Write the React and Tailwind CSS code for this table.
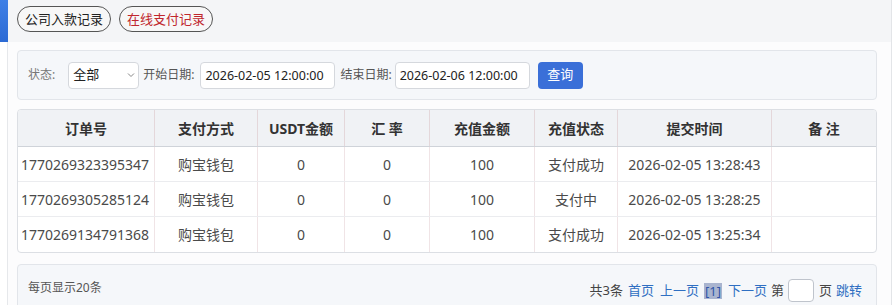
import { useState } from "react";

const rows = [
  { id: "1770269323395347", way: "购宝钱包", usdt: "0", rate: "0", amount: "100", status: "支付成功", time: "2026-02-05 13:28:43" },
  { id: "1770269305285124", way: "购宝钱包", usdt: "0", rate: "0", amount: "100", status: "支付中", time: "2026-02-05 13:28:25" },
  { id: "1770269134791368", way: "购宝钱包", usdt: "0", rate: "0", amount: "100", status: "支付成功", time: "2026-02-05 13:25:34" },
];

const cols = [
  { label: "订单号", w: "w-[137px]" },
  { label: "支付方式", w: "w-[103px]" },
  { label: "USDT金额", w: "w-[87px]" },
  { label: "汇 率", w: "w-[85px]" },
  { label: "充值金额", w: "w-[105px]" },
  { label: "充值状态", w: "w-[83px]" },
  { label: "提交时间", w: "w-[154px]" },
  { label: "备 注", w: "" },
];

export default function App() {
  const [status, setStatus] = useState("全部");

  return (
    <div
      className="flex h-[305px] w-[896px] overflow-hidden bg-white text-[#333]"
      style={{ fontFamily: '"Noto Sans", "Noto Sans CJK SC", sans-serif' }}
    >
      <div className="flex w-[8px] shrink-0 flex-col">
        <div className="h-[42px] shrink-0 bg-gradient-to-b from-[#3f80e6] to-[#2c6ad4]" />
        <div className="flex-1 border-r border-[#e6e8eb]" />
      </div>

      <div className="flex w-[883px] shrink-0 flex-col bg-[#fcfcfd]">
        <div className="flex h-[42px] shrink-0 items-start gap-2 bg-[#f4f5f7] pl-[9px] pt-[6px]">
          <button className="h-[26px] rounded-full border border-[#555] bg-[#f7f7f7] px-[7px] text-[13px] leading-none text-[#222]">
            公司入款记录
          </button>
          <button className="h-[26px] rounded-full border border-[#555] bg-[#f7f7f7] px-[7px] text-[13px] leading-none text-[#c0272d]">
            在线支付记录
          </button>
        </div>

        <div className="flex shrink-0 flex-col px-[9px] pt-[8px]">
          <div className="flex h-[50px] w-[860px] shrink-0 items-center rounded border border-[#e2e5ea] bg-[#f5f7fa] pl-[10px] text-[12px]">
            <span className="mr-[13px] text-[#777]">状态:</span>
            <div className="relative mr-[4px] h-[27px] w-[71px]">
              <select
                value={status}
                onChange={(e) => setStatus(e.target.value)}
                className="h-full w-full appearance-none rounded-sm border border-[#d5d8dd] bg-white pl-[4px] text-[13px] text-[#222] outline-none"
              >
                <option>全部</option>
                <option>支付成功</option>
                <option>支付中</option>
              </select>
              <svg className="pointer-events-none absolute right-[4px] top-[10px]" width="8" height="6" viewBox="0 0 8 6" fill="none" stroke="#888" strokeWidth="1">
                <path d="M1 1.5l3 3 3-3" />
              </svg>
            </div>
            <span className="mr-[6px] text-[#555]">开始日期:</span>
            <input
              readOnly
              value="2026-02-05 12:00:00"
              className="mr-[5px] h-[27px] w-[135px] rounded-sm border border-[#d5d8dd] bg-white px-[4px] text-[12.5px] text-[#222] outline-none"
            />
            <span className="mr-[3px] text-[#555]">结束日期:</span>
            <input
              readOnly
              value="2026-02-06 12:00:00"
              className="mr-[8px] h-[27px] w-[135px] rounded-sm border border-[#d5d8dd] bg-white px-[4px] text-[12.5px] text-[#222] outline-none"
            />
            <button className="h-[27px] w-[45px] rounded bg-[#3a6fd8] text-[13px] text-white">查询</button>
          </div>

          <div className="mt-[9px] w-[860px] shrink-0 overflow-hidden rounded border border-[#dcdfe4] bg-white">
            <div className="flex h-[37px] border-b border-[#cfd3d9] bg-[#f0f2f5] text-[14px] font-bold text-[#333]">
              {cols.map((c, i) => (
                <div
                  key={c.label}
                  className={`flex items-center justify-center ${c.w || "flex-1"} ${i < cols.length - 1 ? "border-r border-[#e4d7da]" : ""}`}
                >
                  {c.label}
                </div>
              ))}
            </div>
            {rows.map((r, ri) => (
              <div
                key={r.id}
                className={`flex h-[35px] text-[14px] text-[#4a4a4a] ${ri < rows.length - 1 ? "border-b border-[#ebecef]" : ""}`}
              >
                <div className="flex w-[137px] items-center border-r border-[#f0e4e6] pl-[3px]">{r.id}</div>
                <div className="flex w-[103px] items-center justify-center border-r border-[#f0e4e6]">{r.way}</div>
                <div className="flex w-[87px] items-center justify-center border-r border-[#f0e4e6]">{r.usdt}</div>
                <div className="flex w-[85px] items-center justify-center border-r border-[#f0e4e6]">{r.rate}</div>
                <div className="flex w-[105px] items-center justify-center border-r border-[#f0e4e6]">{r.amount}</div>
                <div className="flex w-[83px] items-center justify-center border-r border-[#f0e4e6]">{r.status}</div>
                <div className="flex w-[154px] items-center justify-center border-r border-[#f0e4e6]">{r.time}</div>
                <div className="flex-1" />
              </div>
            ))}
          </div>

          <div className="mt-[11px] flex h-[50px] w-[860px] shrink-0 items-start justify-between rounded-t border border-[#e2e5ea] bg-[#f5f7fa] pl-[10px] pr-[14px] pt-[13px] text-[13px]">
            <span className="mt-[1px] text-[12px] text-[#555]">每页显示20条</span>
            <div className="mt-[1px] flex items-center">
              <span className="mr-[5px] text-[#444]">共3条</span>
              <a className="mr-[6px] text-[#2f6fc2]">首页</a>
              <a className="mr-[5px] text-[#2f6fc2]">上一页</a>
              <span className="mr-[6px] bg-[#a9b4cf] px-[1px] leading-[16px] text-[#2f55a8]">[1]</span>
              <a className="mr-[4px] text-[#2f6fc2]">下一页</a>
              <span className="mr-[4px] text-[#444]">第</span>
              <input className="mr-[5px] h-[23px] w-[26px] rounded-sm border border-[#bfc4cc] bg-white outline-none" />
              <span className="mr-[4px] text-[#444]">页</span>
              <a className="text-[#2f6fc2]">跳转</a>
            </div>
          </div>
        </div>
      </div>

      <div className="w-[5px] shrink-0 border-l border-[#e3e5e8] bg-white" />
    </div>
  );
}
